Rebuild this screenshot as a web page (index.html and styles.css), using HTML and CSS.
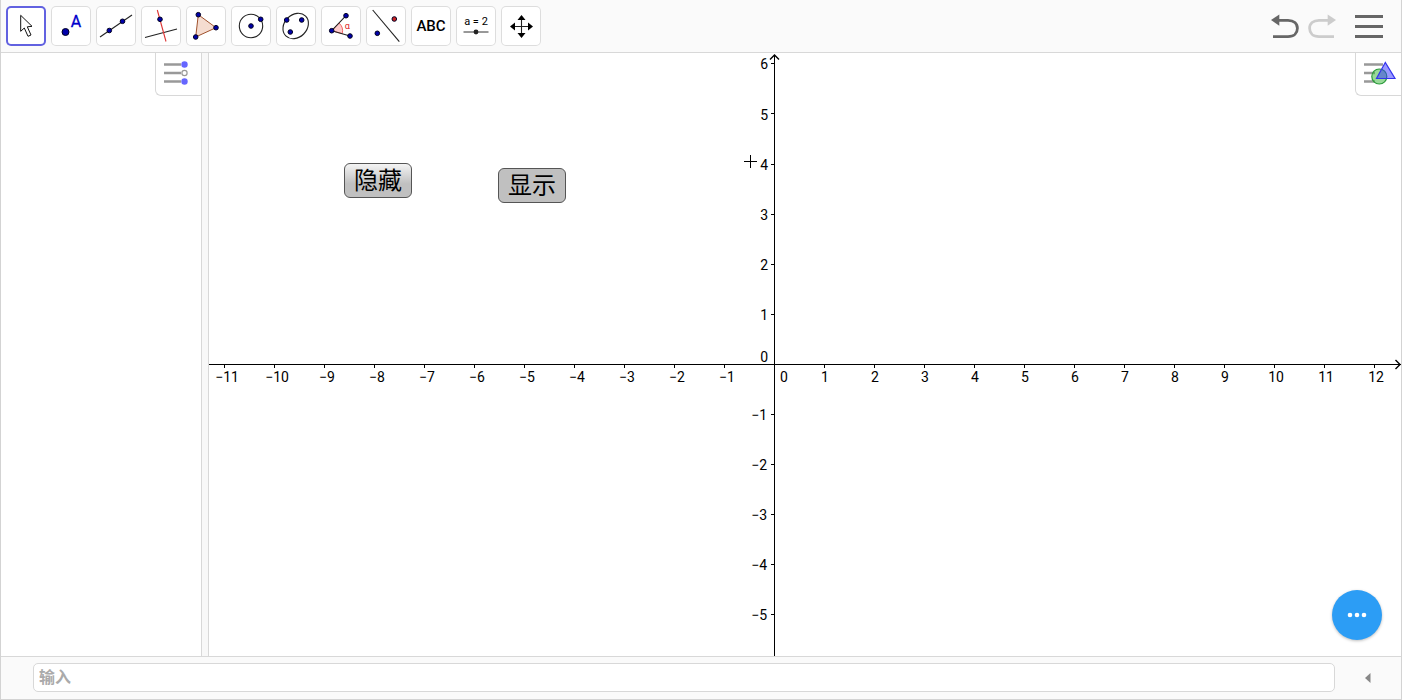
FILE: index.html
```html
<!DOCTYPE html>
<html lang="zh-CN">
<head>
<meta charset="utf-8">
<title>GeoGebra</title>
<link rel="stylesheet" href="styles.css">
</head>
<body>
<div class="app">
  <header class="toolbar">
    <div class="tools">
      <button class="tool selected" aria-label="移动"><svg viewBox="0 0 40 40"><path d="M14.7 9.3V25.3L18.3 22L22 30.3L25 29L21.3 20.8L26 20.3Z" fill="#fff" stroke="#111"/></svg></button>
      <button class="tool" aria-label="描点"><svg viewBox="0 0 40 40"><circle class="pt" cx="14.5" cy="26" r="3.5"/><text class="point-name" x="25" y="21">A</text></svg></button>
      <button class="tool" aria-label="直线"><svg viewBox="0 0 40 40"><path class="ln" d="M4 31L36 9"/><circle class="pt" cx="13.3" cy="24.5" r="2.3"/><circle class="pt" cx="26.5" cy="15.3" r="2.3"/></svg></button>
      <button class="tool" aria-label="垂线"><svg viewBox="0 0 40 40"><path class="ln" d="M4 31.5L36 23"/><path class="ln red" d="M16.3 4L25 35.5"/><circle class="pt" cx="19" cy="13.3" r="2.3"/></svg></button>
      <button class="tool" aria-label="多边形"><svg viewBox="0 0 40 40"><path class="poly" d="M12.3 8.7L30 21.7L9.7 31Z"/><circle class="pt" cx="12.3" cy="8.7" r="2.3"/><circle class="pt" cx="30" cy="21.7" r="2.3"/><circle class="pt" cx="9.7" cy="31" r="2.3"/></svg></button>
      <button class="tool" aria-label="圆"><svg viewBox="0 0 40 40"><circle class="ln" cx="20" cy="20" r="11.7"/><circle class="pt" cx="20" cy="20" r="2.3"/><circle class="pt" cx="29.7" cy="13.3" r="2.3"/></svg></button>
      <button class="tool" aria-label="椭圆"><svg viewBox="0 0 40 40"><ellipse class="ln" cx="19.7" cy="20" rx="14" ry="11.3" transform="rotate(-45 19.7 20)"/><circle class="pt" cx="10.7" cy="14" r="2.3"/><circle class="pt" cx="25.7" cy="14" r="2.3"/><circle class="pt" cx="14.3" cy="26" r="2.3"/></svg></button>
      <button class="tool" aria-label="角度"><svg viewBox="0 0 40 40"><path d="M10.7 24.7L18 17A10.7 10.7 0 0 1 21.2 27.7Z" fill="#fcc" stroke="#e44" stroke-width=".8"/><path class="ln" d="M25 9.7L10.7 24.7L29 30"/><circle class="pt" cx="25" cy="9.7" r="2.3"/><circle class="pt" cx="10.7" cy="24.7" r="2.3"/><circle class="pt" cx="29" cy="30" r="2.3"/><text class="alpha" x="26.3" y="23">α</text></svg></button>
      <button class="tool" aria-label="轴对称"><svg viewBox="0 0 40 40"><path class="ln" d="M6.7 4L33.3 35.7"/><circle class="pt" cx="11.3" cy="27.3" r="2.3"/><circle class="pt redpt" cx="28.3" cy="13" r="2.3"/></svg></button>
      <button class="tool abc">ABC</button>
      <button class="tool" aria-label="滑动条"><svg viewBox="0 0 40 40"><text class="slider-name" x="20" y="19">a = 2</text><path d="M7.5 26H32.5" stroke="#333"/><circle cx="20" cy="26" r="2.4" fill="#222"/></svg></button>
      <button class="tool" aria-label="平移视图"><svg viewBox="0 0 40 40"><path class="ln" d="M20.5 12V28M12 20.5H29"/><path d="M20.5 9L24.5 14H16.5ZM20.5 32L24.5 27H16.5ZM9 20.5L14 16.5V24.5ZM32 20.5L27 16.5V24.5Z"/></svg></button>
    </div>
    <div class="actions">
      <button class="plain" aria-label="撤销"><svg width="28" height="26" viewBox="0 0 28 26"><path d="M8 7.3H17C23 7.3 26.4 10.5 26.4 15.3S23 23.7 17 23.7H2" fill="none" stroke="#666" stroke-width="2.8"/><path d="M0 7L8.3 1.5V12.7Z" fill="#666"/></svg></button>
      <button class="plain redo" aria-label="重做"><svg width="28" height="26" viewBox="0 0 28 26"><path d="M20 7.3H11C5 7.3 1.6 10.5 1.6 15.3S5 23.7 11 23.7H26" fill="none" stroke="#ccc" stroke-width="2.8"/><path d="M28 7L19.7 1.5V12.7Z" fill="#ccc"/></svg></button>
      <button class="plain menu" aria-label="菜单"><svg width="28" height="26" viewBox="0 0 28 26"><path d="M0 3.5H28M0 13.5H28M0 23.5H28" stroke="#666" stroke-width="3"/></svg></button>
    </div>
  </header>

  <main class="views">
    <aside class="algebra">
      <button class="stylebar" aria-label="代数区样式"><svg width="26" height="24" viewBox="0 0 26 24"><path d="M1 3.5H18M1 12H18M1 20.5H18" stroke="#999" stroke-width="2.6"/><circle cx="21.5" cy="3.5" r="3.2" fill="#66f"/><circle cx="21.5" cy="12" r="2.6" fill="#fff" stroke="#999" stroke-width="1.2"/><circle cx="21.5" cy="20.5" r="3.2" fill="#66f"/></svg></button>
    </aside>
    <div class="splitter"></div>
    <section class="graphics">
      <svg class="plane">
        <path class="axis" d="M565.5 3V2000"/>
        <path class="axis arrow" d="M561 6.500L565.5 2L570 6.500"/>
        <line class="axis" x1="0" y1="311.5" x2="100%" y2="311.5"/>
        <svg x="100%" y="311" overflow="visible"><path class="axis arrow" d="M-5.500 -4L-1 .5L-5.500 5"/></svg>
        <path class="axis" d="M15.500 312v3m50-3v3m50-3v3m50-3v3m50-3v3m50-3v3m50-3v3m50-3v3m50-3v3m50-3v3m50-3v3m100-3v3m50-3v3m50-3v3m50-3v3m50-3v3m50-3v3m50-3v3m50-3v3m50-3v3m50-3v3m50-3v3m50-3v3"/>
        <path class="axis" d="M562 10.500h3m-3 50h3m-3 51h3m-3 50h3m-3 50h3m-3 50h3m-3 100h3m-3 50h3m-3 50h3m-3 50h3m-3 50h3"/>
        <g class="xlabels">
          <text x="18" y="329">−11</text><text x="68" y="329">−10</text><text x="118" y="329">−9</text><text x="168" y="329">−8</text><text x="218" y="329">−7</text><text x="268" y="329">−6</text><text x="318" y="329">−5</text><text x="368" y="329">−4</text><text x="418" y="329">−3</text><text x="468" y="329">−2</text><text x="518" y="329">−1</text>
          <text x="575" y="329">0</text><text x="616" y="329">1</text><text x="666" y="329">2</text><text x="716" y="329">3</text><text x="766" y="329">4</text><text x="816" y="329">5</text><text x="866" y="329">6</text><text x="916" y="329">7</text><text x="966" y="329">8</text><text x="1016" y="329">9</text><text x="1067" y="329">10</text><text x="1117" y="329">11</text><text x="1167" y="329">12</text>
        </g>
        <g class="ylabels">
          <text x="559" y="16">6</text><text x="559" y="67">5</text><text x="559" y="117">4</text><text x="559" y="167">3</text><text x="559" y="217">2</text><text x="559" y="267">1</text><text x="559" y="309">0</text><text x="558" y="367">−1</text><text x="558" y="417">−2</text><text x="558" y="467">−3</text><text x="558" y="517">−4</text><text x="558" y="567">−5</text>
        </g>
        <path class="axis" d="M535 108.500H548M541.500 102V115"/>
      </svg>
      <button class="geo hide">隐藏</button>
      <button class="geo show">显示</button>
      <button class="stylebar" aria-label="绘图区样式"><svg width="34" height="26" viewBox="0 0 34 26"><path d="M1 4.500H20M1 13H12M1 21.500H12" stroke="#999" stroke-width="2.6"/><circle cx="16.300" cy="16.500" r="7.500" fill="#32b432" fill-opacity=".5" stroke="#2a9a3a" stroke-width="1.200"/><path d="M22.300 2.500L13.500 18.500H32Z" fill="#33f" fill-opacity=".5" stroke="#33e" stroke-width="1.200"/></svg></button>
      <button class="fab" aria-label="更多"><svg width="20" height="6" viewBox="0 0 20 6"><circle cx="3" cy="3" r="2.300"/><circle cx="10" cy="3" r="2.300"/><circle cx="17" cy="3" r="2.300"/></svg></button>
    </section>
  </main>

  <footer class="inputbar">
    <input class="command" type="text" placeholder="输入" aria-label="输入">
    <button class="plain help" aria-label="输入帮助"><svg width="6" height="10" viewBox="0 0 6 10"><path d="M0 5L5.500 0V10Z" fill="#888"/></svg></button>
  </footer>
</div>
</body>
</html>
```
FILE: styles.css
```css
* { box-sizing: border-box; }
body {
  margin: 0;
  font-family: Roboto, "Noto Sans CJK SC", sans-serif;
  color: #000;
}
button {
  padding: 0;
  border: 0;
  background: none;
  color: inherit;
  font-family: inherit;
}
button svg { display: block; }
.app {
  display: flex;
  flex-direction: column;
  height: 100vh;
  border: 1px solid #d3d3d3;
  border-top: 0;
  background: #fff;
}
.toolbar {
  display: flex;
  justify-content: space-between;
  align-items: center;
  padding: 6px 18px 6px 5px;
  border-bottom: 1px solid #d8d8d8;
  background: #fafafa;
}
.tools { display: flex; gap: 5px; }
.tool {
  width: 40px;
  height: 40px;
  border-radius: 5px;
  background: #fff;
  box-shadow: inset 0 0 0 1px #ddd;
}
.tool.selected { box-shadow: inset 0 0 0 2px #6161e0; }
.abc { font-size: 15px; font-weight: 500; }
.ln { fill: none; stroke: #222; stroke-width: 1.1; }
.red { stroke: #d33; }
.pt { fill: #00a; stroke: #002; stroke-width: 1; }
.redpt { fill: #c22; }
.poly { fill: #f5dcd0; stroke: #a0522d; stroke-width: 1; }
.point-name { fill: #00c; stroke: #00c; stroke-width: .3; font-size: 16px; text-anchor: middle; }
.alpha { fill: #d22; font-size: 9px; text-anchor: middle; }
.slider-name { font-size: 11px; text-anchor: middle; }
.actions { display: flex; align-items: center; gap: 9px; }
.menu { margin-left: 10px; }
.views { display: flex; flex: 1; min-height: 0; }
.algebra { position: relative; width: 200px; }
.splitter {
  width: 8px;
  border: solid #d8d8d8;
  border-width: 0 1px;
  background: #f8f8f8;
}
.graphics { position: relative; flex: 1; overflow: hidden; }
.plane { display: block; width: 100%; height: 100%; font-size: 14px; }
.axis { fill: none; stroke: #000; stroke-width: 1; }
.arrow { stroke-width: 1.4; }
.xlabels { text-anchor: middle; }
.ylabels { text-anchor: end; }
.stylebar {
  position: absolute;
  top: 0;
  right: 0;
  width: 46px;
  height: 43px;
  padding: 0 0 2px 7px;
  border: solid #d8d8d8;
  border-width: 0 0 1px 1px;
  border-radius: 0 0 0 6px;
  background: #fff;
}
.geo {
  position: absolute;
  width: 68px;
  height: 35px;
  border: 1px solid #555;
  border-radius: 6px;
  font-size: 24px;
  line-height: 32px;
}
.hide { left: 135px; top: 110px; background: linear-gradient(#f4f4f4, #c0c0c0 60%); }
.show { left: 289px; top: 115px; background: #c0c0c0; }
.fab {
  position: absolute;
  right: 19px;
  bottom: 16px;
  display: grid;
  place-items: center;
  width: 50px;
  height: 50px;
  border-radius: 50%;
  background: #2c9df5;
  fill: #fff;
  box-shadow: 0 1px 3px #0004;
}
.inputbar {
  display: flex;
  align-items: center;
  gap: 30px;
  padding: 6px 30px 7px 32px;
  border-top: 1px solid #d8d8d8;
  background: #fafafa;
}
.command {
  flex: 1;
  height: 29px;
  padding: 0 5px;
  border: 1px solid #d8d8d8;
  border-radius: 5px;
  background: #fff;
  font: 700 16px Roboto, "Noto Sans CJK SC", sans-serif;
}
.command::placeholder { color: #aaa; opacity: 1; }
```
